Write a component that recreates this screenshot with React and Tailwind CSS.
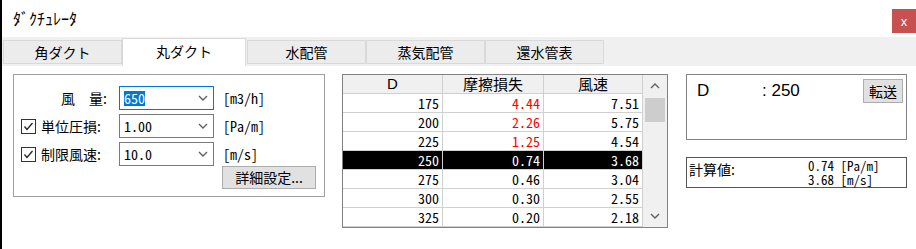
import React from "react"

const jp = "font-['Noto_Sans_CJK_JP',sans-serif]"
const num = "font-['Noto_Sans_Mono_CJK_JP','Liberation_Sans_Narrow','Liberation_Sans',sans-serif]"

const tabs = ["角ダクト", "丸ダクト", "水配管", "蒸気配管", "還水管表"]

const rows = [
  { d: "175", loss: "4.44", v: "7.51", red: true },
  { d: "200", loss: "2.26", v: "5.75", red: true },
  { d: "225", loss: "1.25", v: "4.54", red: true },
  { d: "250", loss: "0.74", v: "3.68", sel: true },
  { d: "275", loss: "0.46", v: "3.04" },
  { d: "300", loss: "0.30", v: "2.55" },
  { d: "325", loss: "0.20", v: "2.18" },
]

function Chevron({ up }) {
  return (
    <svg width="10" height="6" viewBox="0 0 10 6">
      <polyline
        points={up ? "1,5 5,1 9,5" : "1,1 5,5 9,1"}
        fill="none"
        stroke="#606060"
        strokeWidth="1.4"
      />
    </svg>
  )
}

function Check() {
  return (
    <div className="flex h-[15px] w-[15px] items-center justify-center border border-[#333] bg-white">
      <svg width="11" height="11" viewBox="0 0 11 11">
        <polyline points="1.5,5.5 4,8.5 9.5,2" fill="none" stroke="#222" strokeWidth="1.3" />
      </svg>
    </div>
  )
}

function Combo({ value, focus }) {
  return (
    <div
      className={`flex h-[24px] w-[95px] items-center justify-between border bg-white pl-[4px] pr-[5px] ${
        focus ? "border-[#0078d7]" : "border-[#7a7a7a]"
      }`}
    >
      <span className={`${num} text-[14px] leading-[15px] ${focus ? "bg-[#0078d7] text-white" : "text-black"}`}>
        {value}
      </span>
      <Chevron />
    </div>
  )
}

function Row({ label, check, value, unit, focus }) {
  return (
    <div className="flex h-[24px] items-center">
      <div className="flex w-[105px] items-center">
        {check ? (
          <>
            <div className="ml-[7px]">
              <Check />
            </div>
            <span className={`${jp} ml-[5px] text-[14px] leading-none`}>{label}</span>
          </>
        ) : (
          <span className={`${jp} ml-auto mr-[12px] text-[14px] leading-none whitespace-pre`}>{label}</span>
        )}
      </div>
      <Combo value={value} focus={focus} />
      <span className={`${num} ml-[9px] text-[14px]`}>{unit}</span>
    </div>
  )
}

export default function App() {
  return (
    <div className="flex h-[249px] w-[916px] flex-col overflow-hidden border-l-2 border-black bg-white text-black">
      {/* title bar */}
      <div className="flex h-[37px] items-start">
        <span className={`${jp} ml-[11px] mt-[9px] text-[16px] leading-[18px]`}>ﾀﾞｸﾁｭﾚｰﾀ</span>
        <div className="ml-auto mt-[9px] flex h-[24px] w-[24px] items-center justify-center bg-[#c75050] text-[13px] leading-none text-white font-['Liberation_Sans',sans-serif]">
          x
        </div>
      </div>

      {/* tabs */}
      <div className="flex h-[29px] items-start bg-[#f0f0f0] pl-[1px]">
        {tabs.map((t, i) =>
          i === 1 ? (
            <div
              key={t}
              className={`${jp} mt-[1px] flex h-[28px] w-[124px] items-center justify-center border-x border-t border-[#d9d9d9] bg-white pb-[2px] text-[14px]`}
            >
              {t}
            </div>
          ) : (
            <div
              key={t}
              className={`${jp} mt-[3px] flex h-[24px] w-[119px] items-center justify-center border border-[#d9d9d9] bg-[#ececec] text-[14px] ${
                i === 2 ? "ml-[1px]" : ""
              }`}
            >
              {t}
            </div>
          )
        )}
      </div>

      {/* content */}
      <div className="flex items-start pt-[8px]">
        {/* input group */}
        <div className="ml-[11px] flex h-[123px] w-[312px] flex-col gap-[4px] border border-[#a0a0a0] pt-[11px]">
          <Row label={"風　量:"} value="650" unit="[m3/h]" focus />
          <Row label="単位圧損:" check value="1.00" unit="[Pa/m]" />
          <Row label="制限風速:" check value="10.0" unit="[m/s]" />
          <div className="-mt-[4px] pl-[208px]">
            <button
              className={`${jp} flex h-[23px] w-[94px] items-center justify-center border border-[#adadad] bg-[#e1e1e1] text-[14px]`}
            >
              詳細設定...
            </button>
          </div>
        </div>

        {/* table */}
        <div className="ml-[17px] flex w-[326px] border border-[#828282]">
          <div className="flex flex-col">
            <div className="flex h-[19px] border-b border-[#d0d0d0] bg-[#f0f0f0] text-[15px]">
              <div className="flex w-[100px] items-center justify-center border-r border-[#d0d0d0] font-['Liberation_Sans',sans-serif]">
                D
              </div>
              <div className={`${jp} flex w-[101px] items-center justify-center border-r border-[#d0d0d0]`}>
                摩擦損失
              </div>
              <div className={`${jp} flex w-[99px] items-center justify-center border-r border-[#d0d0d0]`}>
                風速
              </div>
            </div>
            {rows.map((r) => (
              <div
                key={r.d}
                className={`${num} flex h-[19px] border-b border-[#d0d0d0] text-[14px] ${
                  r.sel ? "bg-black text-white" : "bg-white"
                }`}
              >
                <div className="flex w-[100px] items-center justify-end border-r border-[#d0d0d0] pr-[3px]">{r.d}</div>
                <div
                  className={`flex w-[101px] items-center justify-end border-r border-[#d0d0d0] pr-[3px] ${
                    r.red ? "text-[#ff0000]" : ""
                  }`}
                >
                  {r.loss}
                </div>
                <div className="flex w-[99px] items-center justify-end border-r border-[#d0d0d0] pr-[3px]">{r.v}</div>
              </div>
            ))}
          </div>
          <div className="flex w-[24px] flex-col bg-[#f0f0f0]">
            <div className="flex h-[22px] items-center justify-center">
              <Chevron up />
            </div>
            <div className="mx-[2px] mt-[1px] h-[24px] bg-[#cdcdcd]" />
            <div className="flex-1" />
            <div className="flex h-[22px] items-center justify-center">
              <Chevron />
            </div>
          </div>
        </div>

        {/* right column */}
        <div className="ml-[18px] flex w-[221px] flex-col">
          <div className="flex h-[66px] items-start border border-[#828282]">
            <div className="mt-[4px] flex h-[24px] w-full items-center pr-[3px]">
              <span className="ml-[10px] w-[65px] font-['Liberation_Sans',sans-serif] text-[17px]">D</span>
              <span className="font-['Liberation_Sans',sans-serif] text-[17px]">: 250</span>
              <button
                className={`${jp} ml-auto flex h-[24px] w-[40px] items-center justify-center border border-[#adadad] bg-[#e1e1e1] text-[14px]`}
              >
                転送
              </button>
            </div>
          </div>
          <div className="mt-[17px] flex h-[31px] items-start border border-[#555] pt-[1px]">
            <span className={`${jp} ml-[2px] mt-[2px] w-[119px] text-[14px] leading-[16px]`}>計算値:</span>
            <div className={`${num} flex flex-col text-[13px] leading-[14px]`}>
              <span>0.74 [Pa/m]</span>
              <span>3.68 [m/s]</span>
            </div>
          </div>
        </div>
      </div>
    </div>
  )
}
